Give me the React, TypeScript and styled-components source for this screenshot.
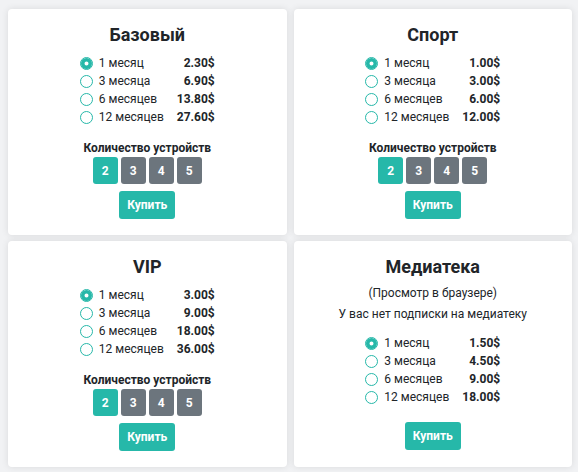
import React, { useState } from "react";
import styled, { createGlobalStyle } from "styled-components";

const GlobalStyle = createGlobalStyle`
  html, body {
    margin: 0;
    padding: 0;
    background: #f1f2f4;
    font-family: Roboto, "Liberation Sans", Arial, sans-serif;
    color: #212529;
  }
  * {
    box-sizing: border-box;
  }
`;

const Page = styled.div`
  display: grid;
  grid-template-columns: 1fr 1fr;
  column-gap: 7px;
  row-gap: 6px;
  padding: 9px 6px 6px 8px;
`;

const Card = styled.div`
  background: #fff;
  border-radius: 4px;
  box-shadow: 0 0 7px rgba(0, 0, 0, 0.1);
  padding: 14px 16px 16px;
  display: flex;
  flex-direction: column;
  align-items: center;
`;

const Title = styled.h2<{ $gap: number }>`
  margin: 0 0 ${(p) => p.$gap}px;
  font-size: 18px;
  line-height: 24px;
  font-weight: 700;
`;

const Note = styled.div<{ $gap: number }>`
  font-size: 12px;
  line-height: 18px;
  margin-bottom: ${(p) => p.$gap}px;
`;

const Periods = styled.div`
  display: grid;
  grid-template-columns: auto auto;
  column-gap: 13px;
  grid-auto-rows: 18px;
  align-items: center;
  font-size: 12px;
`;

const PeriodLabel = styled.label`
  display: flex;
  align-items: center;
  gap: 6px;
  cursor: pointer;
`;

const Radio = styled.input.attrs({ type: "radio" })`
  appearance: none;
  margin: 0;
  width: 13px;
  height: 13px;
  border-radius: 50%;
  border: 1px solid #26b8a9;
  background: #fff;
  cursor: pointer;

  &:checked {
    box-shadow: inset 0 0 0 3.5px #26b8a9;
  }
`;

const Price = styled.span`
  font-weight: 700;
  text-align: right;
`;

const DevicesTitle = styled.div`
  margin-top: 14px;
  font-size: 12px;
  line-height: 16px;
  font-weight: 700;
`;

const Devices = styled.div`
  display: flex;
  gap: 3px;
  margin-top: 1px;
`;

const DeviceButton = styled.button<{ $active?: boolean }>`
  width: 25px;
  height: 27px;
  border: none;
  border-radius: 3px;
  padding: 0;
  font-family: inherit;
  font-size: 12px;
  font-weight: 700;
  color: #fff;
  background: ${(p) => (p.$active ? "#26b8a9" : "#6c757d")};
  cursor: pointer;
`;

const BuyButton = styled.button<{ $gap: number }>`
  margin-top: ${(p) => p.$gap}px;
  height: 28px;
  padding: 0 8px;
  border: none;
  border-radius: 3px;
  background: #26b8a9;
  color: #fff;
  font-family: inherit;
  font-size: 12px;
  font-weight: 700;
  cursor: pointer;
`;

type Plan = {
  name: string;
  prices: string[];
  devices: boolean;
  notes?: string[];
};

const periods = ["1 месяц", "3 месяца", "6 месяцев", "12 месяцев"];

const plans: Plan[] = [
  { name: "Базовый", prices: ["2.30$", "6.90$", "13.80$", "27.60$"], devices: true },
  { name: "Спорт", prices: ["1.00$", "3.00$", "6.00$", "12.00$"], devices: true },
  { name: "VIP", prices: ["3.00$", "9.00$", "18.00$", "36.00$"], devices: true },
  {
    name: "Медиатека",
    prices: ["1.50$", "4.50$", "9.00$", "18.00$"],
    devices: false,
    notes: ["(Просмотр в браузере)", "У вас нет подписки на медиатеку"],
  },
];

const PlanCard: React.FC<{ plan: Plan }> = ({ plan }) => {
  const [period, setPeriod] = useState(0);
  const [devices, setDevices] = useState(2);
  const notes = plan.notes ?? [];

  return (
    <Card>
      <Title $gap={notes.length ? 5 : 7}>{plan.name}</Title>
      {notes.map((n, i) => (
        <Note key={n} $gap={i === notes.length - 1 ? 11 : 3}>
          {n}
        </Note>
      ))}
      <Periods>
        {periods.map((p, i) => (
          <React.Fragment key={p}>
            <PeriodLabel>
              <Radio
                name={plan.name}
                checked={period === i}
                onChange={() => setPeriod(i)}
              />
              {p}
            </PeriodLabel>
            <Price>{plan.prices[i]}</Price>
          </React.Fragment>
        ))}
      </Periods>
      {plan.devices && (
        <>
          <DevicesTitle>Количество устройств</DevicesTitle>
          <Devices>
            {[2, 3, 4, 5].map((d) => (
              <DeviceButton key={d} $active={devices === d} onClick={() => setDevices(d)}>
                {d}
              </DeviceButton>
            ))}
          </Devices>
        </>
      )}
      <BuyButton $gap={plan.devices ? 7 : 16}>Купить</BuyButton>
    </Card>
  );
};

export default function App() {
  return (
    <>
      <GlobalStyle />
      <Page>
        {plans.map((p) => (
          <PlanCard key={p.name} plan={p} />
        ))}
      </Page>
    </>
  );
}
